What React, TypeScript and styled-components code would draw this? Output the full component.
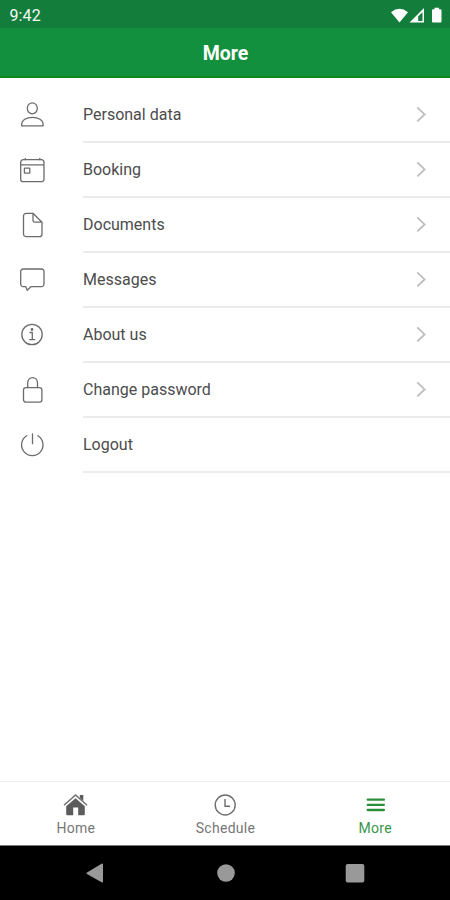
import React from "react";
import styled, { createGlobalStyle } from "styled-components";

const GlobalStyle = createGlobalStyle`
  * { box-sizing: border-box; }
  body { margin: 0; background: #fff; font-family: Roboto, "Noto Sans", sans-serif; }
`;

const Screen = styled.div`
  display: flex;
  flex-direction: column;
  width: 450px;
  height: 900px;
  background: #fff;
  overflow: hidden;
`;

const StatusBar = styled.div`
  display: flex;
  align-items: center;
  justify-content: space-between;
  height: 28px;
  padding: 3px 7px 0 9.5px;
  background: #137d3b;
  color: #f4fbf5;
`;

const Time = styled.span`
  font-size: 16px;
  line-height: 20px;
  letter-spacing: 0.1px;
`;

const AppBar = styled.header`
  display: flex;
  align-items: center;
  justify-content: center;
  height: 50px;
  background: #13903e;
  border-bottom: 2px solid #0f861b;
`;

const Title = styled.h1`
  margin: 0;
  padding: 3px 0 0 1px;
  color: #fff;
  font-size: 19.5px;
  font-weight: 700;
`;

const Menu = styled.main`
  display: flex;
  flex-direction: column;
  flex: 1;
  padding-top: 10px;
`;

const MenuRow = styled.div`
  display: grid;
  grid-template-columns: 83px 1fr;
  height: 55px;
`;

const IconSlot = styled.div`
  display: flex;
  align-items: center;
  padding: 0 0 1px 18px;
`;

const RowBody = styled.div`
  display: flex;
  align-items: center;
  justify-content: space-between;
  padding-right: 22px;
  border-bottom: 2px solid #ebebeb;
`;

const RowLabel = styled.span`
  color: #4c4c4c;
  font-size: 16px;
  line-height: 20px;
`;

const TabBar = styled.nav`
  display: grid;
  grid-template-columns: repeat(3, 1fr);
  height: 65px;
  padding-left: 1px;
  border-top: 1px solid #ececec;
  border-bottom: 1px solid #777;
`;

const Tab = styled.div<{ $active?: boolean }>`
  display: flex;
  flex-direction: column;
  align-items: center;
  padding-top: 10px;
  color: ${(p) => (p.$active ? "#38964a" : "#777")};
`;

const TabLabel = styled.span`
  margin-top: 2px;
  font-size: 14px;
  line-height: 17px;
  letter-spacing: 0.3px;
`;

const SystemBar = styled.div`
  display: grid;
  grid-template-columns: 190px 71px 188px;
  align-items: center;
  justify-items: center;
  height: 54px;
  background: #000;
`;

const LineIcon = styled.svg`
  display: block;
  width: 28px;
  height: 28px;
  fill: none;
  stroke: #6c6c6c;
  stroke-width: 1.3;
  stroke-linejoin: round;
  stroke-linecap: round;
`;

const Glyph = styled.svg`
  display: block;
`;

/* Icon artwork is drawn on a 28-unit grid. */
const rows: { label: string; art: React.ReactNode; arrow: boolean }[] = [
  {
    label: "Personal data", arrow: true,
    art: <><ellipse cx="14.3" cy="7.3" rx="5" ry="5.5" /><path d="M3.700 24.900v-1.600c0-4 4.500-7 10.700-7s10.700 3 10.700 7v1.600z" /></>,
  },
  {
    label: "Booking", arrow: true,
    art: <><path d="M5.200 3.700h18.300a2.500 2.500 0 0 1 2.500 2.500v17a2.500 2.500 0 0 1-2.500 2.500H5.200a2.500 2.500 0 0 1-2.500-2.500v-17a2.500 2.500 0 0 1 2.500-2.500zM2.700 8.800H26" /><path d="M7.300 2.500v1.200M21.800 2.500v1.200" /><rect x="6.4" y="12.2" width="5.4" height="5" rx=".5" /></>,
  },
  {
    label: "Documents", arrow: true,
    art: <path d="M15 2.300H8.200a2.700 2.700 0 0 0-2.700 2.700v18a2.700 2.700 0 0 0 2.700 2.700h13.100a2.700 2.700 0 0 0 2.700-2.700V11.200zv7.100a1.800 1.800 0 0 0 1.800 1.800h7.200" />,
  },
  {
    label: "Messages", arrow: true,
    art: <path d="M5.200 3h18.300a2.500 2.500 0 0 1 2.500 2.500v12.600a2.500 2.500 0 0 1-2.500 2.500H13.200l-4 3.700-1.500-3.700H5.200a2.500 2.500 0 0 1-2.500-2.500V5.500A2.500 2.500 0 0 1 5.200 3z" />,
  },
  {
    label: "About us", arrow: true,
    art: <><circle cx="14" cy="13.5" r="10.2" /><path d="M12 11.500h2.300v7M11.700 18.600h5" /><circle cx="14" cy="8.5" r=".75" fill="#6c6c6c" /></>,
  },
  {
    label: "Change password", arrow: true,
    art: <><rect x="5.5" y="11.6" width="18.4" height="14.6" rx="2.4" /><path d="M9.700 11.600V6.900c0-7.100 9.800-7.100 9.800 0v4.700" /></>,
  },
  {
    label: "Logout", arrow: false,
    art: <path d="M8.700 4.800a10.700 10.700 0 1 0 11.200 0M14.500 2.800v9.900" />,
  },
];

export default function App() {
  return (
    <>
      <GlobalStyle />
      <Screen>
        <StatusBar>
          <Time>9:42</Time>
          <Glyph width="52" height="18" viewBox="0 0 52 18" fill="#fff">
            <path d="M0 5.200Q8.500-1.500 17 5.200L8.500 15.500z" />
            <path fillRule="evenodd" d="M18.500 15.500 33 1V15.500zM27.200 9.300v4.600h4.300V5.200z" />
            <path d="M42 2.200h1.500V.700h4.500v1.500h1.500q1 0 1 1v11.300q0 1-1 1H42q-1 0-1-1V3.200q0-1 1-1z" />
          </Glyph>
        </StatusBar>
        <AppBar><Title>More</Title></AppBar>
        <Menu>
          {rows.map((row) => (
            <MenuRow key={row.label}>
              <IconSlot><LineIcon viewBox="0 0 28 28">{row.art}</LineIcon></IconSlot>
              <RowBody>
                <RowLabel>{row.label}</RowLabel>
                {row.arrow && (
                  <Glyph width="14" height="18" viewBox="0 0 14 18" fill="none" stroke="#bdbdbd" strokeWidth="1.8">
                    <path d="M3.300 1.400l7.300 7-7.300 7" />
                  </Glyph>
                )}
              </RowBody>
            </MenuRow>
          ))}
        </Menu>
        <TabBar>
          <Tab>
            <Glyph width="26" height="26" viewBox="0 0 26 26">
              <path fill="#5c5c5c" d="M3.200 14.200 12.500 6.300 21.800 14.200v8q0 1-1 1h-5.600v-7.700h-5v7.700H4.200q-1 0-1-1zM16.800 3h3.500V9l-3.500-3z" />
              <path fill="none" stroke="#707070" strokeWidth="1.5" d="M1 13.200 12.500 3 24 13.200" />
            </Glyph>
            <TabLabel>Home</TabLabel>
          </Tab>
          <Tab>
            <Glyph width="26" height="26" viewBox="0 0 26 26" fill="none" stroke="#6e6e6e" strokeWidth="1.4">
              <circle cx="13.2" cy="13" r="10" />
              <path d="M13 7v7.200h5" />
            </Glyph>
            <TabLabel>Schedule</TabLabel>
          </Tab>
          <Tab $active>
            <Glyph width="26" height="26" viewBox="0 0 26 26" fill="none" stroke="#2a8f3a" strokeWidth="2.3" strokeLinecap="round">
              <path d="M5.700 7.700h16.200M5.700 12.800h16.200M5.700 18h16.200" />
            </Glyph>
            <TabLabel>More</TabLabel>
          </Tab>
        </TabBar>
        <SystemBar>
          <Glyph width="20" height="22" viewBox="0 0 20 22" fill="#999"><path d="M2 10.400 16.500 1.700q1.500-.8 1.500.9v16.800q0 1.700-1.500.9L2 12q-1.300-.8 0-1.600z" /></Glyph>
          <Glyph width="20" height="20" viewBox="0 0 20 20" fill="#999"><circle cx="10" cy="10" r="8.8" /></Glyph>
          <Glyph width="20" height="20" viewBox="0 0 20 20" fill="#999"><rect x=".7" y=".9" width="18.6" height="18.6" rx="2" /></Glyph>
        </SystemBar>
      </Screen>
    </>
  );
}
